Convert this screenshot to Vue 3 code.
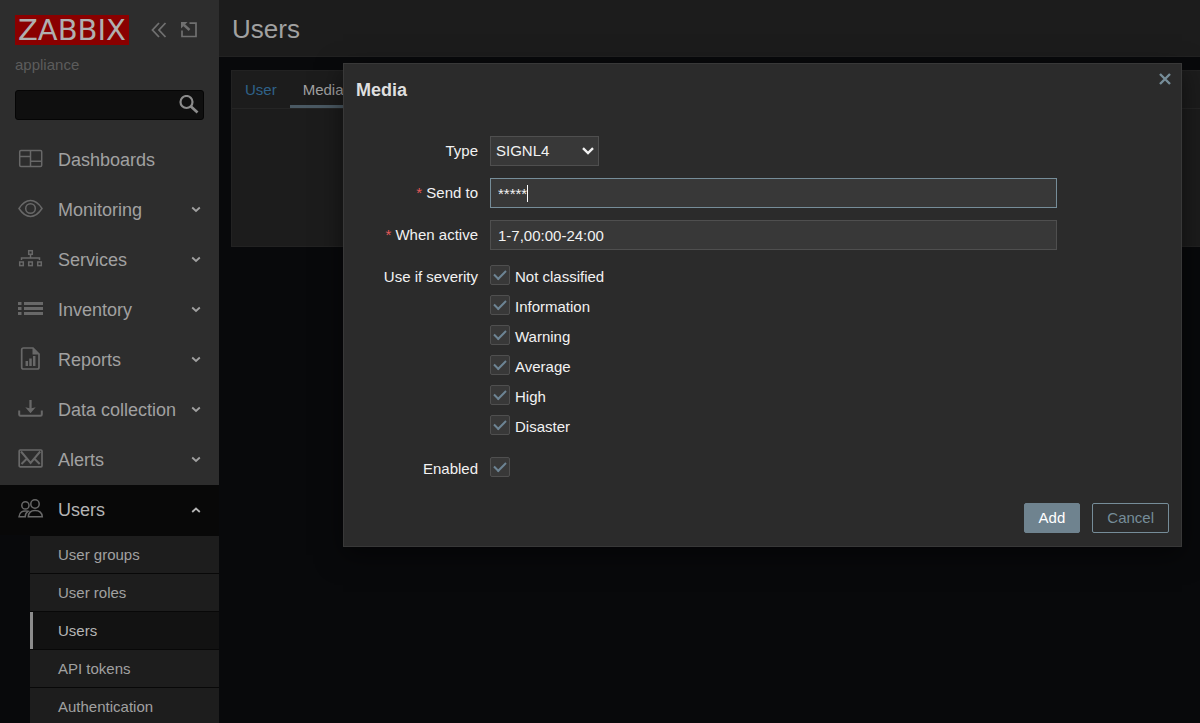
<script setup>
import { computed, nextTick, onMounted, ref } from 'vue'

const menu = [
  { label: 'Dashboards', icon: 'dashboards' },
  { label: 'Monitoring', icon: 'monitoring', children: true },
  { label: 'Services', icon: 'services', children: true },
  { label: 'Inventory', icon: 'inventory', children: true },
  { label: 'Reports', icon: 'reports', children: true },
  { label: 'Data collection', icon: 'collection', children: true },
  { label: 'Alerts', icon: 'alerts', children: true },
  { label: 'Users', icon: 'users', children: true, open: true }
]
const submenu = ['User groups', 'User roles', 'Users', 'API tokens', 'Authentication']
const currentPage = 'Users'

const type = ref('SIGNL4')
const sendTo = ref('*****')
const whenActive = ref('1-7,00:00-24:00')
const enabled = ref(true)
const severities = ref([
  { label: 'Not classified', on: true },
  { label: 'Information', on: true },
  { label: 'Warning', on: true },
  { label: 'Average', on: true },
  { label: 'High', on: true },
  { label: 'Disaster', on: true }
])

const sendToInput = ref(null)
const focused = ref(false)
const FIELD_INSET = 8
const measure = document.createElement('canvas').getContext('2d')
measure.font = '15px "Liberation Sans", Arial, sans-serif'
// The caret stands after the last character of the field.
const caretLeft = computed(() => FIELD_INSET + Math.round(measure.measureText(sendTo.value).width))

onMounted(async () => {
  await nextTick()
  const el = sendToInput.value
  el.focus()
  el.setSelectionRange(el.value.length, el.value.length)
})
</script>

<template>
  <div class="page">
    <aside class="sidebar">
      <div class="sidebar-top">
        <div class="brand">
          <a class="logo" href="#">ZABBIX</a>
          <button class="icon-btn" type="button" aria-label="Collapse sidebar">
            <svg width="16" height="16" viewBox="0 0 16 16" fill="none" stroke="currentColor" stroke-width="1.8">
              <path d="M8 1 1.5 8 8 15M14.500 1 8 8l6.500 7" />
            </svg>
          </button>
          <button class="icon-btn" type="button" aria-label="Hide sidebar">
            <svg width="16" height="16" viewBox="0 0 16 16" fill="none" stroke="currentColor" stroke-width="1.700">
              <path d="M8.500 1.200H15V14.500H1V8.500" />
              <path d="M3 3l5.500 5" stroke-width="2.400" />
              <path d="M0 0h6.500L0 6.500z" fill="currentColor" stroke="none" />
            </svg>
          </button>
        </div>
        <div class="server">appliance</div>
        <form class="search" role="search" @submit.prevent>
          <input type="text" aria-label="Search" />
          <button type="submit" aria-label="Search">
            <svg width="20" height="20" viewBox="0 0 20 20" fill="none" stroke="currentColor">
              <circle cx="7.500" cy="7" r="6" stroke-width="2.200" />
              <path d="M11.700 11.200l6.800 6.300" stroke-width="2.700" />
            </svg>
          </button>
        </form>
      </div>

      <nav class="menu" aria-label="Main">
        <ul>
          <li v-for="item in menu" :key="item.label">
            <a class="menu-item" :class="{ open: item.open }" href="#">
              <svg class="menu-icon" width="26" height="26" viewBox="0 0 26 26" fill="none" stroke="currentColor" stroke-width="1.500">
                <template v-if="item.icon === 'dashboards'">
                  <rect x="1.700" y="3.500" width="22" height="16" rx="1.200" />
                  <path d="M12.500 3.500v16M1.700 9.500h10.800M12.500 14.200h11" />
                </template>
                <template v-else-if="item.icon === 'monitoring'">
                  <path d="M1 11.500C4.500 6.200 8.300 3.600 12.500 3.600S20.500 6.200 24 11.500C20.500 16.800 16.700 19.400 12.500 19.400S4.500 16.800 1 11.500z" />
                  <circle cx="12.500" cy="11.500" r="4.800" />
                </template>
                <template v-else-if="item.icon === 'services'">
                  <rect x="10.700" y="3.700" width="3.600" height="3.600" />
                  <rect x="1.700" y="15" width="3.600" height="3.600" />
                  <rect x="10.700" y="15" width="3.600" height="3.600" />
                  <rect x="19.700" y="15" width="3.600" height="3.600" />
                  <path d="M12.500 7v4.500M3.500 13v-2h18v2" />
                </template>
                <template v-else-if="item.icon === 'inventory'">
                  <path d="M0 6.500h3.500M0 11.500h3.500M0 16.500h3.500M6 6.500h19M6 11.500h19M6 16.500h19" stroke-width="3" />
                </template>
                <template v-else-if="item.icon === 'reports'">
                  <path d="M15 1H5.500Q3.700 1 3.700 2.800V20.200Q3.700 22 5.500 22H19.200Q21 22 21 20.200V7z" stroke-width="1.700" />
                  <path d="M14.500.800V7.500H21.300z" fill="currentColor" stroke="none" />
                  <path d="M8.800 14v5M12.500 11.500v7.500M16.200 9v10" stroke-width="2.500" />
                </template>
                <template v-else-if="item.icon === 'collection'">
                  <path d="M1.200 13.500V17.500Q1.200 18.800 2.500 18.800H22.500Q23.800 18.800 23.800 17.500V13.500" stroke-width="2" />
                  <path d="M12.500 3v9" stroke-width="2.300" />
                  <path d="M7.300 10.300l5.200 1.200 5.200-1.200-5.200 6z" fill="currentColor" stroke="none" />
                </template>
                <template v-else-if="item.icon === 'alerts'">
                  <rect x="1.200" y="3" width="22.800" height="16.800" rx="1" stroke-width="1.700" />
                  <path d="M3 4.500l9.600 11.500L22.200 4.500M3.500 17l5-5M21.700 17l-5-5" stroke-width="2" />
                </template>
                <template v-else>
                  <circle cx="7.400" cy="8.400" r="3.600" />
                  <circle cx="17" cy="7" r="4.200" />
                  <path d="M10.300 19.800C10.500 15.500 13 13.500 17 13.500S24 15.500 24.300 19.800z" />
                  <path d="M10 14.300C4.500 13 1.300 15.300 1 19.800H7.200C7.200 17.300 8 15.500 10 14.300z" />
                </template>
              </svg>
              <span class="menu-label">{{ item.label }}</span>
              <svg v-if="item.children" width="10" height="8" viewBox="0 0 10 8" fill="none" stroke="currentColor" stroke-width="1.800">
                <path :d="item.open ? 'M1.200 6 5 2.500 8.800 6' : 'M1.200 1.500 5 5 8.800 1.500'" />
              </svg>
            </a>
            <ul v-if="item.open" class="submenu">
              <li v-for="sub in submenu" :key="sub">
                <a href="#" :class="{ current: sub === currentPage }">{{ sub }}</a>
              </li>
            </ul>
          </li>
        </ul>
      </nav>
    </aside>

    <main class="main">
      <header class="header"><h1>Users</h1></header>
      <section class="panel">
        <nav class="tabs" aria-label="User form">
          <a href="#">User</a>
          <a href="#" class="selected">Media</a>
        </nav>
      </section>
    </main>

    <div class="dialog" role="dialog" aria-labelledby="dialog-title">
      <button class="close" type="button" aria-label="Close">
        <svg width="12" height="12" viewBox="0 0 12 12" fill="none" stroke="currentColor" stroke-width="2.400">
          <path d="M1 1l10 10M11 1 1 11" />
        </svg>
      </button>
      <h2 id="dialog-title">Media</h2>
      <form @submit.prevent>
        <div class="grid">
          <label for="type">Type</label>
          <div class="select">
            <select id="type" v-model="type">
              <option>SIGNL4</option>
              <option>Email</option>
              <option>SMS</option>
            </select>
            <svg width="12" height="8" viewBox="0 0 12 8" fill="none" stroke="currentColor" stroke-width="2.400">
              <path d="M1 1.200 6 6l5-4.800" />
            </svg>
          </div>

          <label for="sendto" class="required">Send to</label>
          <div class="field">
            <input
              id="sendto"
              ref="sendToInput"
              v-model="sendTo"
              class="text"
              type="text"
              @focus="focused = true"
              @blur="focused = false"
            />
            <span v-if="focused" class="caret" :style="{ left: caretLeft + 'px' }"></span>
          </div>

          <label for="period" class="required">When active</label>
          <input id="period" v-model="whenActive" class="text" type="text" />

          <span id="severity-label" class="label">Use if severity</span>
          <div role="group" aria-labelledby="severity-label">
            <label v-for="s in severities" :key="s.label" class="check">
              <input v-model="s.on" type="checkbox" />{{ s.label }}
            </label>
          </div>

          <label for="enabled">Enabled</label>
          <div class="check"><input id="enabled" v-model="enabled" type="checkbox" /></div>
        </div>
        <footer>
          <button class="btn primary" type="submit">Add</button>
          <button class="btn" type="button">Cancel</button>
        </footer>
      </form>
    </div>
  </div>
</template>

<style>
body {
  background: #08090b;
}
</style>

<style scoped>
* {
  box-sizing: border-box;
}
.page {
  position: relative;
  display: flex;
  height: 100vh;
  overflow: hidden;
  background: #08090b;
  color: #a1a1a1;
  font: 15px/18px "Liberation Sans", Arial, sans-serif;
}
button,
input,
select {
  font: inherit;
  color: inherit;
  margin: 0;
}
a {
  color: inherit;
  text-decoration: none;
}
ul {
  list-style: none;
  margin: 0;
  padding: 0;
}
svg {
  display: block;
  flex: none;
}

.sidebar {
  flex: none;
  width: 219px;
}
.sidebar-top {
  padding: 15px;
  background: #2d2d2d;
}
.brand {
  display: flex;
  align-items: center;
}
.logo {
  margin-right: 22px;
  padding: 0 3px;
  background: #8a0000;
  color: #b0b0b0;
  font: 29px/30px "DejaVu Sans", sans-serif;
}
.icon-btn {
  margin-right: 14px;
  padding: 0;
  border: 0;
  background: none;
  color: #707070;
}
.server {
  margin-top: 11px;
  color: #5c5c5c;
}
.search {
  display: flex;
  height: 30px;
  margin-top: 16px;
  border: 1px solid #050505;
  border-radius: 3px;
  background: #0f0f0f;
}
.search input {
  flex: 1;
  min-width: 0;
  padding: 0 8px;
  border: 0;
  outline: 0;
  background: none;
}
.search button {
  padding: 0 4px;
  border: 0;
  background: none;
  color: #8b8b8b;
}

.menu-item {
  display: flex;
  align-items: center;
  height: 50px;
  padding: 0 18px;
  background: #2d2d2d;
  font-size: 18px;
}
.menu-item.open {
  background: #080808;
  color: #b5b5b5;
}
.menu-icon {
  margin-right: 14px;
  color: #686868;
}
.menu-label {
  flex: 1;
}
.submenu {
  margin-left: 30px;
}
.submenu li {
  border-top: 1px solid #080808;
}
.submenu a {
  display: block;
  padding: 10px 25px 9px;
  border-left: 3px solid #1d1d1d;
  background: #1d1d1d;
}
.submenu a.current {
  border-left-color: #8c8c8c;
  background: #121212;
  color: #b5b5b5;
}

.main {
  flex: 1;
  min-width: 0;
}
.header {
  padding: 14px 13px 12px;
  border-bottom: 1px solid #222;
  background: #1c1c1c;
}
h1 {
  margin: 0;
  font-size: 26px;
  line-height: 30px;
  font-weight: 400;
}
.panel {
  min-height: 177px;
  margin: 13px 0 0 12px;
  border: 1px solid #222;
  border-right: 0;
  background: #1c1c1c;
}
.tabs {
  display: flex;
  border-bottom: 1px solid #252525;
}
.tabs a {
  padding: 10px 13px 6px;
  border-bottom: 3px solid transparent;
  color: #2f628a;
}
.tabs a.selected {
  border-color: #4a5963;
  color: #a1a1a1;
}

.dialog {
  position: absolute;
  top: 63px;
  left: 343px;
  right: 18px;
  padding: 16px 12px 13px;
  border: 1px solid #383838;
  background: #2b2b2b;
  box-shadow: 0 8px 25px rgba(0, 0, 0, 0.5);
  color: #f2f2f2;
}
.close {
  position: absolute;
  top: 9px;
  right: 10px;
  padding: 0;
  border: 0;
  background: none;
  color: #768d99;
}
h2 {
  margin: 0;
  font-size: 18px;
  line-height: 20px;
  color: #dfdfdf;
}
.grid {
  display: grid;
  grid-template-columns: 122px minmax(0, 567px);
  gap: 12px;
  margin-top: 36px;
}
.grid > label,
.label {
  line-height: 30px;
  text-align: right;
}
.required::before {
  content: "* ";
  color: #e45959;
}
.text,
.select select {
  height: 30px;
  border: 1px solid #4f4f4f;
  border-radius: 0;
  outline: 0;
  background: #383838;
}
.text {
  display: block;
  width: 100%;
  padding: 0 7px;
}
.text:focus {
  border-color: #768d99;
}
.field {
  position: relative;
}
.field .text {
  caret-color: transparent;
}
.caret {
  position: absolute;
  top: 7px;
  width: 1px;
  height: 17px;
  background: #fff;
  pointer-events: none;
}
.select {
  position: relative;
  justify-self: start;
}
.select select {
  display: block;
  width: 109px;
  padding: 0 24px 0 5px;
  appearance: none;
}
.select svg {
  position: absolute;
  top: 11px;
  right: 5px;
  pointer-events: none;
}
.check {
  display: flex;
  align-items: center;
  gap: 5px;
  height: 30px;
}
.check input {
  display: grid;
  place-content: center;
  width: 20px;
  height: 20px;
  margin-bottom: 4px;
  border: 1px solid #4f4f4f;
  border-radius: 2px;
  background: #383838;
  appearance: none;
}
.check input:checked::before {
  content: "";
  box-sizing: border-box;
  width: 12px;
  height: 7px;
  margin-bottom: 3px;
  border: solid #6d8494;
  border-width: 0 0 2px 2px;
  transform: rotate(-45deg);
}
footer {
  display: flex;
  justify-content: flex-end;
  gap: 12px;
  margin-top: 19px;
}
.btn {
  height: 30px;
  padding: 0 14px;
  border: 1px solid #768d99;
  border-radius: 2px;
  background: none;
  color: #768d99;
}
.primary {
  border-color: #6f838f;
  background: #6f838f;
  color: #fff;
}
</style>
